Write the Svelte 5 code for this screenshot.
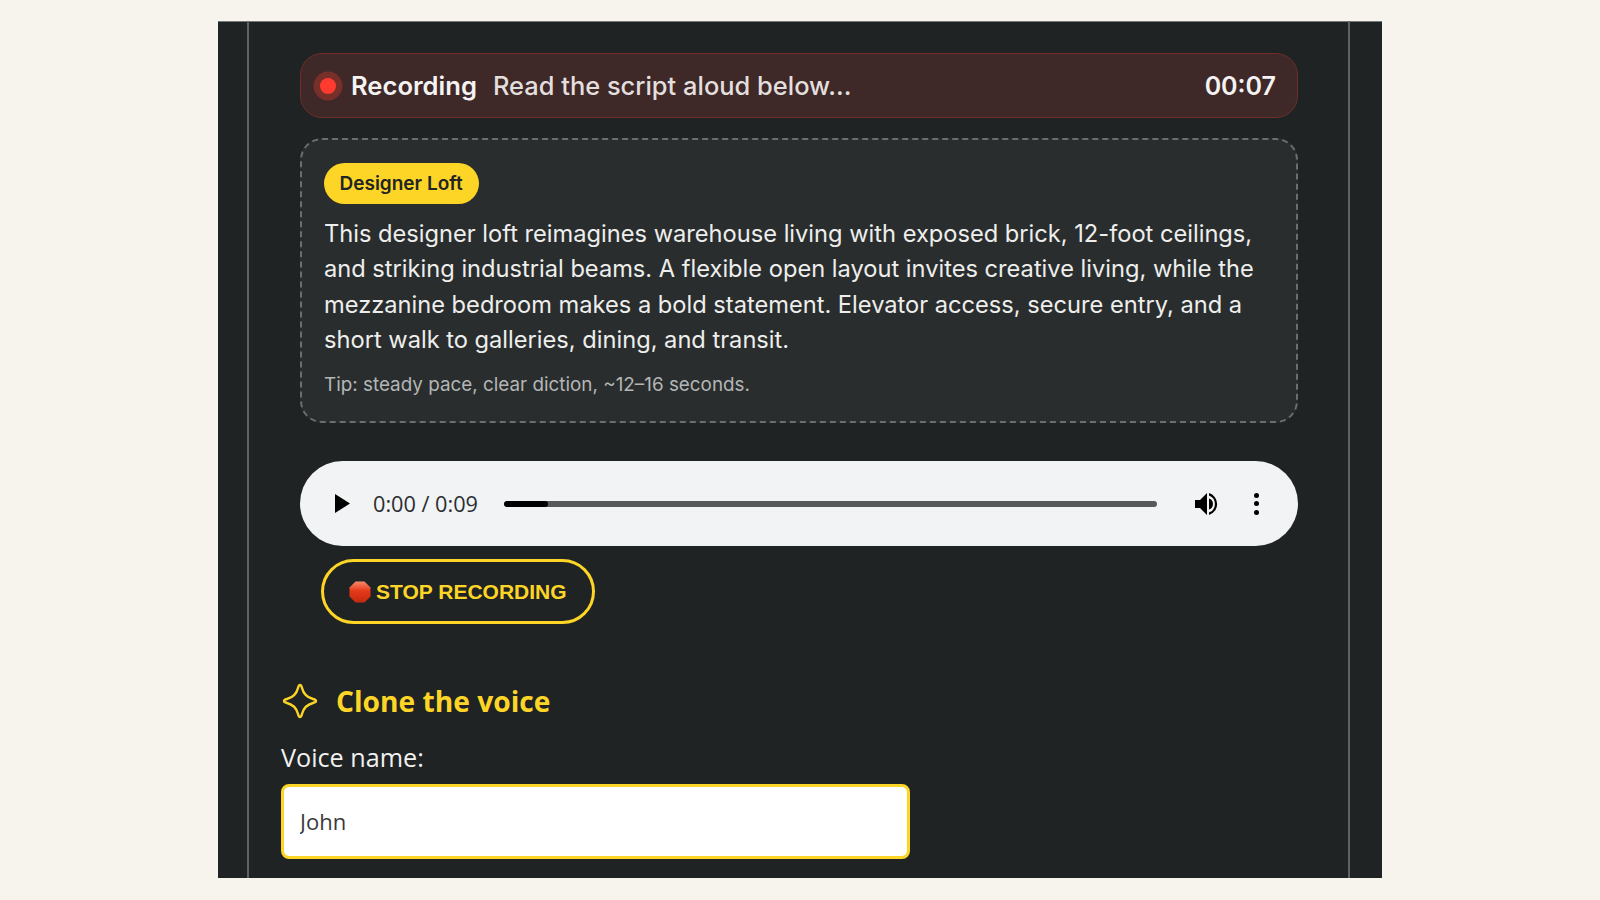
<script lang="ts">
	// Static recreation of the voice clone recording step
	let voiceName = 'John';
</script>

<div class="page">
	<div class="frame">
		<div class="column">
			<div class="script-area">
				<div class="rec-bar">
					<span class="rec-dot"></span>
					<strong class="rec-label">Recording</strong>
					<span class="rec-hint">Read the script aloud below...</span>
					<span class="rec-time">00:07</span>
				</div>

				<div class="script-card">
					<span class="badge">Designer Loft</span>
					<p class="script-text">This designer loft reimagines warehouse living with exposed brick, 12-foot ceilings, and striking industrial beams. A flexible open layout invites creative living, while the mezzanine bedroom makes a bold statement. Elevator access, secure entry, and a short walk to galleries, dining, and transit.</p>
					<p class="tip">Tip: steady pace, clear diction, ~12–16 seconds.</p>
				</div>

				<div class="player">
					<svg class="play" viewBox="0 0 15 19" width="15" height="19"><path d="M0 0 L15 9.5 L0 19 Z" /></svg>
					<span class="player-time">0:00 / 0:09</span>
					<div class="track"><div class="track-fill" style="width: 6.8%"></div></div>
					<svg class="volume" viewBox="0 0 25 24" width="25" height="24">
						<path d="M0 8 H5 L12 1 V23 L5 16 H0 Z" />
						<path d="M14 1 A11.5 11.5 0 0 1 14 23 V20.6 A9.2 9.2 0 0 0 14 3.4 Z" />
						<path d="M14 6.5 A5.8 5.8 0 0 1 14 17.5 Z" />
					</svg>
					<div class="dots"><i></i><i></i><i></i></div>
				</div>

				<button class="stop-btn" type="button">
					<svg viewBox="0 0 22 22" width="22" height="22">
						<defs>
							<linearGradient id="stopFill" x1="0" y1="0" x2="0" y2="1">
								<stop offset="0" stop-color="#f58a6a" />
								<stop offset="0.45" stop-color="#e5391a" />
								<stop offset="1" stop-color="#c22a0c" />
							</linearGradient>
						</defs>
						<path d="M6.5 0.5 H15.5 L21.5 6.5 V15.5 L15.5 21.5 H6.5 L0.5 15.5 V6.5 Z" fill="url(#stopFill)" />
					</svg>
					STOP RECORDING
				</button>
			</div>

			<h2 class="clone-title">
				<svg viewBox="0 0 36 36" width="36" height="36">
					<path d="M18 2 C19 2 19.5 3 20 5 C21.5 11 25 14.5 31 16 C33 16.5 34 17 34 18 C34 19 33 19.5 31 20 C25 21.5 21.5 25 20 31 C19.5 33 19 34 18 34 C17 34 16.5 33 16 31 C14.5 25 11 21.5 5 20 C3 19.5 2 19 2 18 C2 17 3 16.5 5 16 C11 14.5 14.5 11 16 5 C16.5 3 17 2 18 2 Z" />
				</svg>
				Clone the voice
			</h2>
			<label class="field-label" for="voice-name">Voice name:</label>
			<input id="voice-name" class="field-input" type="text" bind:value={voiceName} />
		</div>
	</div>
</div>

<style>
	:global(body) {
		margin: 0;
		background: #f7f4ed;
	}

	.page {
		height: 900px;
		padding: 21px 218px 22px;
		box-sizing: border-box;
		overflow: hidden;
	}

	.frame {
		height: 857px;
		background: #1f2324;
		box-shadow: inset 0 1px 0 #77797a;
		padding: 0 32px 0 29px;
		box-sizing: border-box;
		overflow: hidden;
	}

	.column {
		height: 100%;
		padding: 32px 50.5px 0 32px;
		border-left: 2px solid #5f6263;
		border-right: 2px solid #5f6263;
		box-sizing: border-box;
		font-family: "Open Sans", sans-serif;
	}

	.script-area {
		margin-left: 19px;
		display: flex;
		flex-direction: column;
		align-items: flex-start;
		font-family: Inter, sans-serif;
	}

	/* Recording bar */
	.rec-bar {
		width: 100%;
		height: 65px;
		box-sizing: border-box;
		display: flex;
		align-items: center;
		padding: 0 20.5px 0 13px;
		background: #3e2828;
		border: 1px solid #6f2d2b;
		border-radius: 22px;
		color: #e3dfde;
		font-size: 25.6px;
	}

	.rec-dot {
		width: 16px;
		height: 16px;
		margin: 0 8px 0 6px;
		border-radius: 50%;
		background: #ff3b30;
		box-shadow: 0 0 0 6.5px #772f2a;
		flex: none;
	}

	.rec-label {
		margin-left: 7px;
		font-weight: 600;
		color: #f5f3f2;
	}

	.rec-hint {
		margin-left: 16px;
		font-size: 25.45px;
		font-weight: 500;
	}

	.rec-time {
		margin-left: auto;
		font-weight: 600;
		font-size: 25px;
		color: #f5f3f2;
	}

	/* Script card */
	.script-card {
		width: 100%;
		margin-top: 20px;
		padding: 23px 22px 22.5px;
		box-sizing: border-box;
		background: #292d2e;
		border: 2px dashed #6a6e70;
		border-radius: 22px;
	}

	.badge {
		display: inline-block;
		padding: 0 16px 0 15.5px;
		height: 41px;
		line-height: 41px;
		border-radius: 21px;
		background: #fdd526;
		color: #1f2425;
		font-size: 19px;
		font-weight: 600;
	}

	.script-text {
		margin: 12px 0 0;
		font-size: 23.65px;
		line-height: 35.4px;
		color: #eeeeec;
	}

	.tip {
		margin: 13.2px 0 0;
		font-size: 18.85px;
		line-height: 28px;
		color: #b4b6b6;
	}

	/* Audio player */
	.player {
		width: 100%;
		height: 85px;
		margin-top: 38px;
		padding: 0 39px 0 35px;
		box-sizing: border-box;
		display: flex;
		align-items: center;
		background: #f1f3f4;
		border-radius: 43px;
		color: #2b2d30;
		font-family: "Open Sans", sans-serif;
	}

	.play {
		flex: none;
	}

	.player-time {
		margin-left: 23px;
		font-size: 21.7px;
		white-space: nowrap;
	}

	.track {
		flex: 1;
		height: 6px;
		margin: 0 38px 0 26px;
		border-radius: 3px;
		background: #595959;
		overflow: hidden;
	}

	.track-fill {
		height: 100%;
		background: #000;
		border-radius: 3px;
	}

	.volume {
		flex: none;
	}

	.dots {
		display: flex;
		flex-direction: column;
		gap: 3.5px;
		margin-left: 34px;
	}

	.dots i {
		display: block;
		width: 5px;
		height: 5px;
		border-radius: 50%;
		background: #000;
	}

	/* Stop button */
	.stop-btn {
		margin: 13px 0 0 21px;
		height: 65px;
		width: 274px;
		padding: 0 0 0 25px;
		box-sizing: border-box;
		display: flex;
		align-items: center;
		gap: 5px;
		background: transparent;
		border: 3px solid #fdd526;
		border-radius: 33px;
		color: #fdd526;
		font-family: "Liberation Sans", sans-serif;
		font-size: 21px;
		font-weight: 700;
		white-space: nowrap;
	}

	/* Clone form */
	.clone-title {
		margin: 59px 0 0 1px;
		display: flex;
		align-items: center;
		gap: 18px;
		font-size: 28.2px;
		line-height: 36px;
		font-weight: 700;
		color: #fdd526;
	}

	.clone-title svg {
		flex: none;
		fill: none;
		stroke: #fdd526;
		stroke-width: 2.4;
		stroke-linejoin: round;
	}

	.field-label {
		display: block;
		margin-top: 21px;
		font-size: 25.2px;
		line-height: 34px;
		color: #f1f1ef;
	}

	.field-input {
		display: block;
		width: 629px;
		height: 75px;
		margin-top: 10px;
		padding: 0 16px 1px;
		box-sizing: border-box;
		background: #fff;
		border: 3px solid #fdd526;
		border-radius: 8px;
		color: #3a3a3a;
		font-family: "Open Sans", sans-serif;
		font-size: 22px;
		outline: none;
	}
</style>
